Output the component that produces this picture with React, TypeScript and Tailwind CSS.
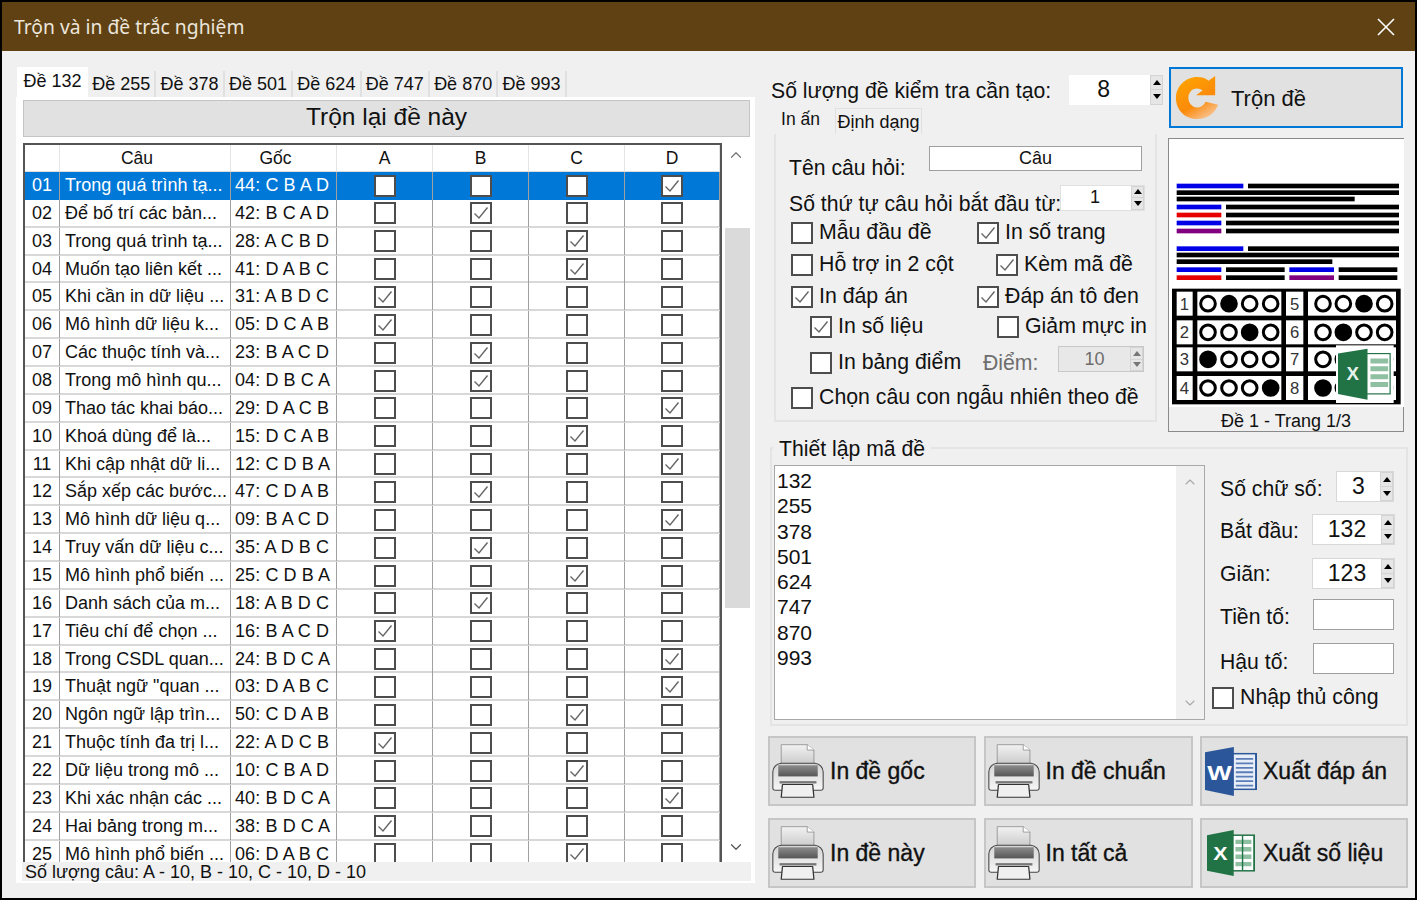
import React from "react";
import { ChevronUp, ChevronDown } from "lucide-react";

const rows = [
  ["01", "Trong quá trình tạ...", "44: C B A D", "D"],
  ["02", "Để bố trí các bản...", "42: B C A D", "B"],
  ["03", "Trong quá trình tạ...", "28: A C B D", "C"],
  ["04", "Muốn tạo liên kết ...", "41: D A B C", "C"],
  ["05", "Khi cần in dữ liệu ...", "31: A B D C", "A"],
  ["06", "Mô hình dữ liệu k...", "05: D C A B", "A"],
  ["07", "Các thuộc tính và...", "23: B A C D", "B"],
  ["08", "Trong mô hình qu...", "04: D B C A", "B"],
  ["09", "Thao tác khai báo...", "29: D A C B", "D"],
  ["10", "Khoá dùng để là...", "15: D C A B", "C"],
  ["11", "Khi cập nhật dữ li...", "12: C D B A", "D"],
  ["12", "Sắp xếp các bước...", "47: C D A B", "B"],
  ["13", "Mô hình dữ liệu q...", "09: B A C D", "D"],
  ["14", "Truy vấn dữ liệu c...", "35: A D B C", "B"],
  ["15", "Mô hình phổ biến ...", "25: C D B A", "C"],
  ["16", "Danh sách của m...", "18: A B D C", "B"],
  ["17", "Tiêu chí để chọn ...", "16: B A C D", "A"],
  ["18", "Trong CSDL quan...", "24: B D C A", "D"],
  ["19", "Thuật ngữ \"quan ...", "03: D A B C", "D"],
  ["20", "Ngôn ngữ lập trìn...", "50: C D A B", "C"],
  ["21", "Thuộc tính đa trị l...", "22: A D C B", "A"],
  ["22", "Dữ liệu trong mô ...", "10: C B A D", "C"],
  ["23", "Khi xác nhận các ...", "40: B D C A", "D"],
  ["24", "Hai bảng trong m...", "38: B D C A", "A"],
  ["25", "Mô hình phổ biến ...", "06: D A B C", "C"],
];

const tabs = ["Đề 255", "Đề 378", "Đề 501", "Đề 624", "Đề 747", "Đề 870", "Đề 993"];
const codes = ["132", "255", "378", "501", "624", "747", "870", "993"];

const Check = ({ on }: { on?: boolean }) => (
  <span className="flex h-[22px] w-[22px] shrink-0 items-center justify-center border-2 border-[#4d4d4d] bg-white">
    {on && (
      <svg width="18" height="18" viewBox="0 0 18 18">
        <path d="M2.5 9.5 L7 14 L15.5 3.5" fill="none" stroke="#666" strokeWidth="1.4" />
      </svg>
    )}
  </span>
);

const Option = ({ label, on }: { label: string; on?: boolean }) => (
  <div className="flex items-center gap-[6px] text-[21.3px] leading-none whitespace-nowrap">
    <Check on={on} />
    <span>{label}</span>
  </div>
);

const Arrows = ({ dim }: { dim?: boolean }) => (
  <div className="flex w-[13px] shrink-0 flex-col self-stretch border border-[#d4d4d4] bg-[#e6e6e6]">
    <div className="flex flex-1 items-center justify-center border-b border-[#d4d4d4]">
      <span className={`h-0 w-0 border-x-[4px] border-b-[5px] border-x-transparent ${dim ? "border-b-[#777]" : "border-b-black"}`} />
    </div>
    <div className="flex flex-1 items-center justify-center">
      <span className={`h-0 w-0 border-x-[4px] border-t-[5px] border-x-transparent ${dim ? "border-t-[#777]" : "border-t-black"}`} />
    </div>
  </div>
);

const Printer = () => (
  <svg width="52" height="54" viewBox="28 40 124 160" preserveAspectRatio="none" className="shrink-0">
    <defs>
      <linearGradient id="pp" x1="0" y1="0" x2="0" y2="1">
        <stop offset="0" stopColor="#f2f2f2" />
        <stop offset="1" stopColor="#c4c4c4" />
      </linearGradient>
      <linearGradient id="pb" x1="0" y1="0" x2="0" y2="1">
        <stop offset="0" stopColor="#d4d4d4" />
        <stop offset="1" stopColor="#f6f6f6" />
      </linearGradient>
      <linearGradient id="pd" x1="0" y1="0" x2="0" y2="1">
        <stop offset="0" stopColor="#8c8c8c" />
        <stop offset="1" stopColor="#565656" />
      </linearGradient>
    </defs>
    <path d="M50 42 H112 L128 58 V110 H50 Z" fill="url(#pp)" stroke="#888" strokeWidth="2" />
    <path d="M112 42 V58 H128" fill="#fff" stroke="#888" strokeWidth="2" />
    <path d="M30 122 Q32 100 50 97 H130 Q148 100 150 122 V170 Q150 177 144 177 H36 Q30 177 30 170 Z" fill="url(#pb)" stroke="#444" strokeWidth="2.5" />
    <rect x="43" y="103" width="94" height="33" fill="url(#pd)" />
    <rect x="46" y="150" width="88" height="7" fill="#777" />
    <path d="M53 160 H125 L128 198 H50 Z" fill="#f0f0f0" stroke="#333" strokeWidth="3" strokeLinejoin="round" />
  </svg>
);

const Word = () => (
  <svg width="52" height="49" viewBox="0 0 54 66" preserveAspectRatio="none" className="ml-[1px] shrink-0">
    <rect x="28" y="9" width="25" height="48" fill="#e8eef7" stroke="#2b579a" strokeWidth="2" />
    <path d="M32 16h18M32 22h18M32 28h18M32 34h18M32 40h18M32 46h18M32 52h18" stroke="#5b7db8" strokeWidth="2.4" />
    <path d="M0 7 L30 0 V66 L0 58 Z" fill="#2b579a" />
    <text x="15" y="44" textAnchor="middle" fill="#fff" fontSize="27" fontWeight="700" fontFamily="'Liberation Sans', sans-serif">W</text>
  </svg>
);

const Excel = () => (
  <svg width="48" height="46" viewBox="0 0 54 62" preserveAspectRatio="none" className="ml-[3px] mr-[2px] shrink-0">
    <rect x="28" y="7" width="25" height="48" fill="#fff" stroke="#217346" strokeWidth="2" />
    <path d="M32 13h18v6H32zM32 23h18v6H32zM32 33h18v6H32zM32 43h18v6H32z" fill="#8fc0a2" />
    <path d="M40 8v46" stroke="#217346" strokeWidth="1.6" />
    <path d="M0 7 L30 0 V62 L0 55 Z" fill="#217346" />
    <text x="15" y="40" textAnchor="middle" fill="#fff" fontSize="24" fontWeight="700" fontFamily="'Liberation Sans', sans-serif">X</text>
  </svg>
);

const ActionButton = ({ icon, label }: { icon: React.ReactNode; label: string }) => (
  <div className="flex h-[70px] w-full items-center border-2 border-[#c6c6c6] bg-[#e1e1e1] pl-[2px]">
    {icon}
    <span className="ml-[6px] text-[23px] leading-none whitespace-nowrap [-webkit-text-stroke:0.35px_#111]">{label}</span>
  </div>
);

const Bar = ({ x, y, w, c = "#000" }: { x: number; y: number; w: number; c?: string }) => (
  <rect x={x} y={y} width={w} height="14" fill={c} />
);

const bubbleRows = [
  { y: 730, n: ["1", "5"], l: 1, r: 2 },
  { y: 816, n: ["2", "6"], l: 2, r: 1 },
  { y: 897, n: ["3", "7"], l: 0, r: -1 },
  { y: 983, n: ["4", "8"], l: 3, r: 0 },
];

const Preview = () => (
  <svg width="235" height="268" viewBox="55 236 705 804" className="block bg-white">
    <Bar x={78} y={370} w={200} c="#0000e6" />
    <Bar x={292} y={370} w={453} />
    <Bar x={78} y={390} w={667} />
    <Bar x={78} y={409} w={534} />
    <Bar x={78} y={433} w={134} c="#0000e6" />
    <Bar x={226} y={433} w={519} />
    <Bar x={78} y={457} w={134} c="#e60000" />
    <Bar x={226} y={457} w={519} />
    <Bar x={78} y={481} w={134} c="#0000e6" />
    <Bar x={226} y={481} w={519} />
    <Bar x={78} y={505} w={134} c="#800080" />
    <Bar x={226} y={505} w={519} />
    <Bar x={78} y={558} w={200} c="#0000e6" />
    <Bar x={292} y={558} w={453} />
    <Bar x={78} y={577} w={667} />
    <Bar x={78} y={597} w={467} />
    <Bar x={78} y={621} w={134} c="#0000e6" />
    <Bar x={226} y={621} w={176} />
    <Bar x={416} y={621} w={134} c="#0000e6" />
    <Bar x={564} y={621} w={176} />
    <Bar x={78} y={645} w={134} c="#e60000" />
    <Bar x={226} y={645} w={176} />
    <Bar x={416} y={645} w={134} c="#800080" />
    <Bar x={564} y={645} w={176} />
    <rect x="64" y="685" width="686" height="347" fill="#000" />
    {bubbleRows.map((r) => (
      <g key={r.y}>
        <rect x="78" y={r.y - 36} width="48" height="72" fill="#fff" />
        <rect x="140" y={r.y - 36} width="252" height="72" fill="#fff" />
        <rect x="406" y={r.y - 36} width="52" height="72" fill="#fff" />
        <rect x="472" y={r.y - 36} width="264" height="72" fill="#fff" />
        <text x="101" y={r.y + 18} textAnchor="middle" fontSize="50" fill="#333" fontFamily="'Liberation Sans', sans-serif">{r.n[0]}</text>
        <text x="432" y={r.y + 18} textAnchor="middle" fontSize="50" fill="#333" fontFamily="'Liberation Sans', sans-serif">{r.n[1]}</text>
        {[172, 235, 297, 360].map((cx, i) => (
          <circle key={cx} cx={cx} cy={r.y} r="22" fill={i === r.l ? "#000" : "#fff"} stroke="#000" strokeWidth="9" />
        ))}
        {[517, 578, 640, 702].map((cx, i) => (
          <circle key={cx} cx={cx} cy={r.y} r="22" fill={i === r.r ? "#000" : "#fff"} stroke="#000" strokeWidth="9" />
        ))}
      </g>
    ))}
    <rect x="556" y="855" width="173" height="173" fill="#fff" />
    <g transform="translate(562 865) scale(2.95)">
      <rect x="28" y="5" width="25" height="41" fill="#fff" stroke="#217346" strokeWidth="1.2" />
      <path d="M33 10h18v5H33zM33 18h18v5H33zM33 26h18v5H33zM33 34h18v5H33z" fill="#8fc0a2" />
      <path d="M0 5 L30 0 V52 L0 46 Z" fill="#217346" />
      <text x="15" y="32" textAnchor="middle" fill="#e8f2ec" fontSize="19" fontWeight="700" fontFamily="'Liberation Sans', sans-serif">X</text>
    </g>
  </svg>
);

export default function App() {
  return (
    <div className="flex h-[900px] w-[1417px] flex-col overflow-hidden border-2 border-black bg-[#f0f0f0] font-['Liberation_Sans',sans-serif] text-[#111]">
      {/* title bar */}
      <div className="flex h-[49px] shrink-0 items-center justify-between bg-[#5f4114] pl-[12px] pr-[19px] text-white">
        <span className="pt-[2px] font-['Noto_Sans',sans-serif] text-[19.3px] text-[#ece6dc]">Trộn và in đề trắc nghiệm</span>
        <svg width="20" height="20" viewBox="0 0 20 20">
          <path d="M2 2 L18 18 M18 2 L2 18" stroke="#fff" strokeWidth="1.6" />
        </svg>
      </div>

      <div className="flex flex-1 pl-[14px] pt-[16px]">
        {/* left side */}
        <div className="flex w-[739px] shrink-0 flex-col">
          <div className="flex h-[30px] items-end pl-px">
            <div className="flex h-[30px] w-[71px] justify-center bg-white pt-px text-[18px]">Đề 132</div>
            {tabs.map((t) => (
              <div key={t} className="flex h-[26px] w-[68.4px] items-center justify-center border-r-2 border-[#e0e0e0] bg-[#f0f0f0] text-[18px]">
                {t}
              </div>
            ))}
          </div>
          <div className="flex h-[786px] flex-col bg-white pl-[7px] pr-[5px] pt-[3px]">
            <div className="flex h-[37px] items-center justify-center border border-[#c4c4c4] bg-[#e1e1e1] pb-[2px] text-[24.5px]">Trộn lại đề này</div>
            <div className="mt-[6px] flex h-[719px]">
              <div className="h-full w-[699px] overflow-hidden border-x-2 border-t-2 border-[#555]">
                <div className="grid h-[27px] grid-cols-[35px_171px_106px_96px_96px_96px_95px] border-b border-[#ddd] text-[17.5px]">
                  <div className="border-r border-[#e4e4e4]" />
                  <div className="flex items-center justify-center border-r border-[#e4e4e4] pr-[16px]">Câu</div>
                  <div className="flex items-center justify-center border-r border-[#e4e4e4] pr-[16px]">Gốc</div>
                  {["A", "B", "C", "D"].map((h) => (
                    <div key={h} className="flex items-center justify-center border-r border-[#e4e4e4]">{h}</div>
                  ))}
                </div>
                {rows.map((r, i) => (
                  <div
                    key={r[0]}
                    className={`grid h-[27.87px] grid-cols-[35px_171px_106px_96px_96px_96px_95px] text-[18px] ${i === 0 ? "bg-[#0078d7] text-white" : "border-b-2 border-[#d8d8d8]"}`}
                  >
                    <div className="flex items-center justify-center border-r border-[#a0a0a0]">{r[0]}</div>
                    <div className="flex items-center overflow-hidden border-r border-[#a0a0a0] pl-[5px] whitespace-nowrap">{r[1]}</div>
                    <div className="flex items-center overflow-hidden border-r border-[#a0a0a0] pl-[4px] tracking-[0.1px] whitespace-nowrap">{r[2]}</div>
                    {["A", "B", "C", "D"].map((k) => (
                      <div key={k} className="flex items-center justify-center border-r border-[#a0a0a0]">
                        <Check on={r[3] === k} />
                      </div>
                    ))}
                  </div>
                ))}
              </div>
              <div className="flex h-full w-[28px] flex-col items-center bg-white">
                <ChevronUp size={18} strokeWidth={1.6} className="mt-[3px] text-[#777]" />
                <div className="mt-[64px] ml-[3px] h-[380px] w-[25px] bg-[#dadada]" />
                <ChevronDown size={18} strokeWidth={1.6} className="mt-auto mb-[6px] text-[#555]" />
              </div>
            </div>
            <div className="-mx-px flex h-[19px] items-center bg-[#f0f0f0] pl-[3px] text-[18px] leading-none">Số lượng câu: A - 10, B - 10, C - 10, D - 10</div>
          </div>
        </div>

        {/* right side */}
        <div className="ml-[13px] flex w-[640px] shrink-0 flex-col">
          <div className="flex">
            <div className="flex w-[400px] shrink-0 flex-col pl-[3px]">
              <div className="flex h-[39px] items-center pt-[6px]">
                <span className="pt-[3px] text-[21.2px] whitespace-nowrap">Số lượng đề kiểm tra cần tạo:</span>
                <div className="ml-[18px] flex h-[30px] w-[94px] items-center bg-white">
                  <span className="flex-1 pr-[12px] text-center text-[23px]">8</span>
                  <Arrows />
                </div>
              </div>
              <div className="flex h-[28px] items-end">
                <div className="flex h-[28px] w-[59px] justify-center text-[17.5px]">In ấn</div>
                <div className="ml-[5px] flex h-[26px] w-[87px] items-center justify-center border border-b-0 border-[#e0e0e0] pt-px text-[18px]">Định dạng</div>
              </div>
              <div className="ml-[3px] flex h-[288px] w-[383px] flex-col border-2 border-t-0 border-[#e4e4e4] pl-[13px]">
                <div className="mt-[12px] flex h-[25px] items-center">
                  <span className="w-[140px] pt-[18px] text-[21.2px]">Tên câu hỏi:</span>
                  <div className="flex h-[25px] w-[213px] items-center justify-center border border-[#9f9f9f] bg-white text-[18px]">Câu</div>
                </div>
                <div className="mt-[14px] flex h-[25px] items-center">
                  <span className="w-[271px] pt-[12px] text-[21.2px] whitespace-nowrap">Số thứ tự câu hỏi bắt đầu từ:</span>
                  <div className="flex h-[26px] w-[85px] items-center border border-[#e0e0e0] bg-white">
                    <span className="flex-1 pr-[2px] text-center text-[18px]">1</span>
                    <Arrows />
                  </div>
                </div>
                <div className="mt-[12px] flex pl-[2px]">
                  <div className="w-[186px]"><Option label="Mẫu đầu đề" /></div>
                  <Option label="In số trang" on />
                </div>
                <div className="mt-[10px] flex pl-[2px]">
                  <div className="w-[205px]"><Option label="Hỗ trợ in 2 cột" /></div>
                  <Option label="Kèm mã đề" on />
                </div>
                <div className="mt-[10px] flex pl-[2px]">
                  <div className="w-[186px]"><Option label="In đáp án" on /></div>
                  <Option label="Đáp án tô đen" on />
                </div>
                <div className="mt-[8px] flex pl-[21px]">
                  <div className="w-[187px]"><Option label="In số liệu" on /></div>
                  <Option label="Giảm mực in" />
                </div>
                <div className="mt-[8px] flex h-[26px] items-center pl-[21px]">
                  <div className="w-[173px] pt-[8px]"><Option label="In bảng điểm" /></div>
                  <span className="w-[75px] pt-[8px] text-[21.2px] text-[#6d6d6d]">Điểm:</span>
                  <div className="flex h-[26px] w-[86px] items-center border border-[#c8c8c8] bg-[#e8e8e8]">
                    <span className="flex-1 text-center text-[18px] text-[#6d6d6d]">10</span>
                    <Arrows dim />
                  </div>
                </div>
                <div className="mt-[15px] pl-[2px]">
                  <Option label="Chọn câu con ngẫu nhiên theo đề" />
                </div>
              </div>
            </div>

            <div className="flex w-[236px] shrink-0 flex-col">
              <div className="ml-px flex h-[61px] w-[234px] items-center border-2 border-[#0078d7] bg-[#e1e1e1] pl-[4px]">
                <svg width="44" height="44" viewBox="0 0 46 46">
                  <defs>
                    <linearGradient id="rf" x1="0.2" y1="0" x2="0.8" y2="1">
                      <stop offset="0" stopColor="#ffa400" />
                      <stop offset="0.6" stopColor="#fb8a0a" />
                      <stop offset="1" stopColor="#f8c9a0" />
                    </linearGradient>
                  </defs>
                  <path d="M23 1 C28 1 32 2 35 5 L42 0 V20 H22 L29 15 C27 14 25 13 23 13 C17 13 14 18 14 23 C14 28 18 33 23 33 C27 33 30 31 32 27 L45 30 C42 39 34 45 23 45 C10 45 1 35 1 23 C1 11 11 1 23 1 Z" fill="url(#rf)" />
                </svg>
                <span className="ml-[12px] pt-[2px] text-[22px]">Trộn đề</span>
              </div>
              <div className="mt-[10px] w-[236px] border border-[#8a8a8a] bg-[#f0f0f0]">
                <Preview />
                <div className="flex h-[24px] items-center justify-center pt-[5px] text-[18px]">Đề 1 - Trang 1/3</div>
              </div>
            </div>
          </div>

          {/* code settings group */}
          <div className="relative mt-[15px] ml-[2px] flex h-[279px] w-[638px] border-2 border-[#e4e4e4] pl-[2px] pt-[16px]">
            <span className="absolute -top-[12px] left-[1px] bg-[#f0f0f0] px-[6px] text-[21.2px] leading-[24px]">Thiết lập mã đề</span>
            <div className="flex h-[255px] w-[431px] border border-[#a8a8a8] bg-white">
              <div className="flex-1 pl-[2px] pt-[2px] text-[21px] leading-[25.3px]">
                {codes.map((c) => <div key={c}>{c}</div>)}
              </div>
              <div className="flex w-[28px] flex-col items-center justify-between bg-[#f0f0f0] py-[8px]">
                <ChevronUp size={16} strokeWidth={1.6} className="text-[#a8a8a8]" />
                <ChevronDown size={16} strokeWidth={1.6} className="text-[#a8a8a8]" />
              </div>
            </div>
            <div className="ml-[7px] flex flex-1 flex-col">
              <div className="mt-[5px] flex h-[32px] items-center pl-[8px] text-[21.2px]">
                <span className="w-[116px] pt-[6px]">Số chữ số:</span>
                <div className="flex h-[31px] w-[58px] items-center border border-[#d8d8d8] bg-white">
                  <span className="flex-1 text-center text-[23px]">3</span>
                  <Arrows />
                </div>
              </div>
              <div className="mt-[12px] flex h-[31px] items-center pl-[8px] text-[21.2px]">
                <span className="w-[92px] pt-[2px]">Bắt đầu:</span>
                <div className="flex h-[31px] w-[83px] items-center border border-[#d8d8d8] bg-white">
                  <span className="flex-1 text-center text-[23px]">132</span>
                  <Arrows />
                </div>
              </div>
              <div className="mt-[13px] flex h-[31px] items-center pl-[8px] text-[21.2px]">
                <span className="w-[92px]">Giãn:</span>
                <div className="flex h-[31px] w-[83px] items-center border border-[#d8d8d8] bg-white">
                  <span className="flex-1 text-center text-[23px]">123</span>
                  <Arrows />
                </div>
              </div>
              <div className="mt-[10px] flex h-[31px] items-center pl-[8px] text-[21.2px]">
                <span className="w-[93px] pt-[4px]">Tiền tố:</span>
                <div className="h-[31px] w-[81px] border border-[#9f9f9f] bg-white" />
              </div>
              <div className="mt-[13px] flex h-[31px] items-center pl-[8px] text-[21.2px]">
                <span className="w-[93px] pt-[6px]">Hậu tố:</span>
                <div className="h-[31px] w-[81px] border border-[#9f9f9f] bg-white" />
              </div>
              <div className="mt-[13px]"><Option label="Nhập thủ công" /></div>
            </div>
          </div>

          {/* action buttons */}
          <div className="mt-[10px] grid grid-cols-[208px_209px_208px] gap-x-[7.5px] gap-y-[12px]">
            <ActionButton icon={<Printer />} label="In đề gốc" />
            <ActionButton icon={<Printer />} label="In đề chuẩn" />
            <ActionButton icon={<Word />} label="Xuất đáp án" />
            <ActionButton icon={<Printer />} label="In đề này" />
            <ActionButton icon={<Printer />} label="In tất cả" />
            <ActionButton icon={<Excel />} label="Xuất số liệu" />
          </div>
        </div>
      </div>
    </div>
  );
}
